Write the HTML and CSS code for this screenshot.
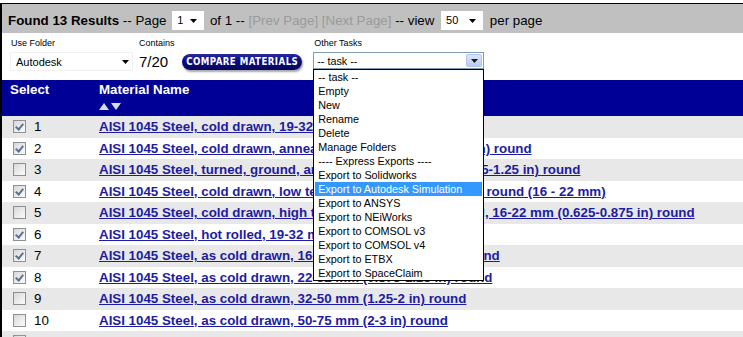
FILE: index.html
```html
<!DOCTYPE html>
<html>
<head>
    <meta charset="UTF-8">
    <title>Material Search Results</title>
    <link rel="stylesheet" href="styles.css">
</head>
<body>
    <div class="panel">

        <div class="pager">
            <b>Found 13 Results</b> -- Page
            <span class="pick pick-page">1 <svg width="7" height="4"><path d="M0 0h7L3.5 4z"/></svg></span>
            of 1 -- <span class="off">[Prev Page]</span> <span class="off">[Next Page]</span> -- view
            <span class="pick pick-view">50 <svg width="7" height="4"><path d="M0 0h7L3.5 4z"/></svg></span>
            per page
        </div>

        <div class="tools">
            <div class="field field-folder">
                <label>Use Folder</label>
                <span class="pick pick-folder">Autodesk <svg width="7" height="4"><path d="M0 0h7L3.5 4z"/></svg></span>
            </div>
            <div class="field field-count">
                <label>Contains</label>
                <div class="count-row">
                    <span class="count">7/20</span>
                    <span class="compare-btn">COMPARE MATERIALS</span>
                </div>
            </div>
            <div class="field field-tasks">
                <label>Other Tasks</label>
                <div class="task-wrap">
                    <span class="task-pick">-- task --
                        <span class="task-btn"><svg width="7" height="4"><path d="M0 0h7L3.5 4z"/></svg></span>
                    </span>
                    <ul class="task-menu">
                        <li>-- task --</li>
                        <li>Empty</li>
                        <li>New</li>
                        <li>Rename</li>
                        <li>Delete</li>
                        <li>Manage Folders</li>
                        <li>---- Express Exports ----</li>
                        <li>Export to Solidworks</li>
                        <li class="hot">Export to Autodesk Simulation</li>
                        <li>Export to ANSYS</li>
                        <li>Export to NEiWorks</li>
                        <li>Export to COMSOL v3</li>
                        <li>Export to COMSOL v4</li>
                        <li>Export to ETBX</li>
                        <li>Export to SpaceClaim</li>
                    </ul>
                </div>
            </div>
        </div>

        <table class="results">
            <tr class="head">
                <th class="col-select">Select</th>
                <th class="col-name">Material Name
                    <svg class="sort" width="22" height="7"><path d="M0 7L5 0L10 7z M12 0h10L17 7z"/></svg>
                </th>
            </tr>
            <tr class="alt"><td class="col-select"><span class="box on"></span>1</td><td class="col-name"><a href="#">AISI 1045 Steel, cold drawn, 19-32 mm (0.75-1.25 in) round</a></td></tr>
            <tr><td class="col-select"><span class="box on"></span>2</td><td class="col-name"><a href="#">AISI 1045 Steel, cold drawn, annealed, 19-32 mm (0.75-1.25 in) round</a></td></tr>
            <tr class="alt"><td class="col-select"><span class="box"></span>3</td><td class="col-name"><a href="#">AISI 1045 Steel, turned, ground, and polished, 19-32 mm (0.75-1.25 in) round</a></td></tr>
            <tr><td class="col-select"><span class="box on"></span>4</td><td class="col-name"><a href="#">AISI 1045 Steel, cold drawn, low temperature stress relieved, round (16 - 22 mm)</a></td></tr>
            <tr class="alt"><td class="col-select"><span class="box"></span>5</td><td class="col-name"><a href="#">AISI 1045 Steel, cold drawn, high temperature stress relieved, 16-22 mm (0.625-0.875 in) round</a></td></tr>
            <tr><td class="col-select"><span class="box on"></span>6</td><td class="col-name"><a href="#">AISI 1045 Steel, hot rolled, 19-32 mm (0.75-1.25 in) round</a></td></tr>
            <tr class="alt"><td class="col-select"><span class="box on"></span>7</td><td class="col-name"><a href="#">AISI 1045 Steel, as cold drawn, 16-22 mm (0.625-0.875 in) round</a></td></tr>
            <tr><td class="col-select"><span class="box on"></span>8</td><td class="col-name"><a href="#">AISI 1045 Steel, as cold drawn, 22-32 mm (0.875-1.25 in) round</a></td></tr>
            <tr class="alt"><td class="col-select"><span class="box"></span>9</td><td class="col-name"><a href="#">AISI 1045 Steel, as cold drawn, 32-50 mm (1.25-2 in) round</a></td></tr>
            <tr><td class="col-select"><span class="box"></span>10</td><td class="col-name"><a href="#">AISI 1045 Steel, as cold drawn, 50-75 mm (2-3 in) round</a></td></tr>
            <tr class="alt"><td class="col-select"><span class="box"></span>11</td><td class="col-name"><a href="#">AISI 1045 Steel, as cold drawn, 75-100 mm (3-4 in) round</a></td></tr>
        </table>

    </div>
</body>
</html>
```

FILE: styles.css
```css
body {
    margin: 0;
    background: #fff;
    font-family: "Liberation Sans", Arial, sans-serif;
    font-size: 13.33px;
    color: #000;
}

.panel {
    margin-top: 3px;
    border-top: 1px solid #000;
    border-left: 2px solid #000;
}

/* pager bar */
.pager {
    background: #c0c0c0;
    height: 29px;
    box-sizing: border-box;
    padding: 7px 0 0 6px;
    line-height: 19px;
    white-space: nowrap;
}

.pager .off {
    color: #9a9a9a;
}

.pick {
    display: inline-flex;
    align-items: center;
    justify-content: space-between;
    box-sizing: border-box;
    height: 19px;
    background: #fff;
    font-size: 11px;
    vertical-align: top;
    padding: 0 7px 0 5px;
}

.pick svg {
    fill: #000;
}

.pick-page {
    width: 32px;
    margin: 0 2px;
}

.pick-view {
    width: 42px;
    margin: 0 3px;
}

/* folder tools */
.tools {
    display: flex;
    height: 47px;
    box-sizing: border-box;
    padding: 5px 0 0 8px;
}

.field label {
    display: block;
    font-size: 9px;
    line-height: 11px;
    padding-left: 1px;
    margin-bottom: 3px;
}

.pick-folder {
    width: 123px;
    padding: 0 3px 0 5px;
    border: 1px solid #f0f0f0;
}

.field-count {
    margin-left: 6px;
}

.field-count label {
    padding-left: 0;
}

.count-row {
    display: flex;
    align-items: center;
    height: 19px;
}

.count {
    font-size: 15px;
}

.compare-btn {
    margin-left: 14px;
    width: 120px;
    height: 16px;
    box-sizing: border-box;
    margin-top: 1px;
    border-radius: 8px;
    background: linear-gradient(#2a2aa0, #0b0b80 45%, #07075e);
    box-shadow: 1px 2px 2px rgba(0, 0, 0, 0.35);
    color: #fff;
    font-family: "DejaVu Sans Condensed", "DejaVu Sans", sans-serif;
    font-weight: bold;
    font-size: 9.6px;
    letter-spacing: 0.45px;
    line-height: 16px;
    text-align: center;
}

.field-tasks {
    margin-left: 11px;
}

.task-wrap {
    position: relative;
    margin-top: 1px;
}

.task-pick {
    display: flex;
    align-items: center;
    justify-content: space-between;
    width: 171px;
    height: 17px;
    box-sizing: border-box;
    border: 1px solid #7f9db9;
    background: #fff;
    font-size: 10.8px;
    padding-left: 3px;
}

.task-btn {
    display: flex;
    align-items: center;
    justify-content: center;
    width: 16px;
    height: 13px;
    margin-right: 1px;
    box-sizing: border-box;
    border: 1px solid #b2c4ef;
    border-radius: 2px;
    background: linear-gradient(#dbe5fd, #b9cbf9);
}

.task-btn svg {
    fill: #1a1a1a;
}

.task-menu {
    position: absolute;
    top: 100%;
    left: 0;
    width: 171px;
    box-sizing: border-box;
    margin: 0;
    padding: 0 1px;
    list-style: none;
    border: 1px solid #000;
    background: #fff;
    font-size: 10.8px;
    line-height: 14px;
    z-index: 5;
}

.task-menu li {
    padding-left: 3px;
    white-space: nowrap;
}

.task-menu li.hot {
    background: #3399ff;
    color: #fff;
}

/* results table */
.results {
    width: 100%;
    border-collapse: collapse;
}

.head {
    background: #000096;
    color: #fff;
}

.head th {
    text-align: left;
    vertical-align: top;
    line-height: 16px;
    padding: 2px 0 6px;
    height: 28px;
}

.head th.col-select {
    padding-left: 8px;
    width: 87px;
}

.head th.col-name {
    padding-left: 2px;
}

.sort {
    display: block;
    margin-top: 5px;
    fill: #d8d8e6;
}

.results td {
    height: 21.5px;
    padding: 0;
    white-space: nowrap;
}

.results tr.alt td {
    background: #e8e8e8;
}

td.col-select {
    padding-left: 11px;
}

td.col-name {
    padding-left: 2px;
}

.box {
    display: inline-block;
    position: relative;
    width: 13px;
    height: 13px;
    box-sizing: border-box;
    border: 1px solid #8e8f8f;
    background: linear-gradient(135deg, #d8d8d8, #fbfbfb);
    vertical-align: -2px;
    margin-right: 8px;
}

.box.on::after {
    content: "";
    position: absolute;
    left: 3px;
    top: 1px;
    width: 3px;
    height: 6px;
    border: solid #5b7296;
    border-width: 0 2px 2px 0;
    transform: rotate(40deg);
}

.results a {
    color: #1c1ca3;
    font-weight: bold;
}
```
